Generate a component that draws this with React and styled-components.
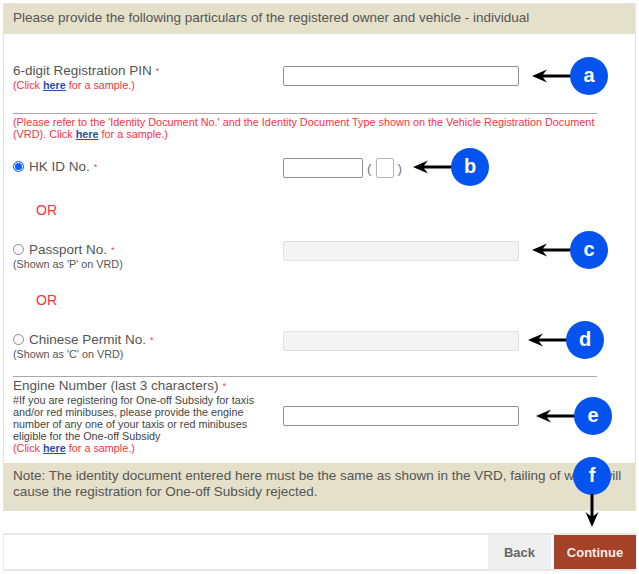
import styled, { createGlobalStyle } from 'styled-components';

const GlobalStyle = createGlobalStyle`
  html, body { margin: 0; padding: 0; background: #fff; }
  body { font-family: "Liberation Sans", Arial, sans-serif; color: #555; }
`;

const Page = styled.div`
  position: relative;
  width: 639px;
  height: 574px;
  padding: 3px 3px 0;
  box-sizing: border-box;
  overflow: hidden;
`;

const Panel = styled.div`
  width: 633px;
  height: 508px;
  box-sizing: border-box;
  border: 1px solid #e4e4e4;
  display: flex;
  flex-direction: column;
`;

const Banner = styled.div`
  background: #e4e0ca;
  font-size: 13.5px;
  line-height: 16px;
  color: #555;
  padding: ${(p) => (p.$note ? '5px 9px 0' : '6px 9px 0')};
  height: ${(p) => p.$h}px;
  box-sizing: border-box;
  flex: none;
`;

const Row = styled.div`
  display: grid;
  grid-template-columns: 270px 1fr;
  padding-left: 9px;
  height: ${(p) => p.$h}px;
  flex: none;
  box-sizing: border-box;
  padding-top: ${(p) => p.$top || 0}px;
`;

const LabelCol = styled.div`
  display: flex;
  flex-direction: column;
  margin-top: ${(p) => p.$mt || 0}px;
`;

const Label = styled.div`
  font-size: 13.5px;
  line-height: 16px;
  color: #555;
  display: flex;
  align-items: center;
`;

const Star = styled.span`
  color: #e8435a;
  font-size: 9px;
  margin-left: 4px;
`;

const Sample = styled.div`
  font-size: 10.8px;
  line-height: 12px;
  color: #f5333f;
`;

const SubText = styled.div`
  font-size: 10.8px;
  line-height: 12px;
  color: #555;
`;

const EngineText = styled.div`
  font-size: 10.8px;
  line-height: 12px;
  color: #444;
  width: 250px;
`;

const Link = styled.a`
  color: #1f4fa8;
  font-weight: bold;
  text-decoration: underline;
`;

const Radio = styled.span`
  width: 11px;
  height: 11px;
  border-radius: 50%;
  box-sizing: border-box;
  margin-right: 5px;
  flex: none;
  position: relative;
  top: -1px;
  border: ${(p) => (p.$on ? '1px solid #1a73e8' : '1px solid #8a8a8a')};
  background: ${(p) => (p.$on ? '#0b5fff' : '#fff')};
  box-shadow: ${(p) => (p.$on ? 'inset 0 0 0 1px #fff' : 'none')};
`;

const TextBox = styled.div`
  width: ${(p) => p.$w}px;
  height: 20px;
  margin-top: ${(p) => p.$mt || 0}px;
  box-sizing: border-box;
  border-radius: 2px;
  border: 1px solid ${(p) => (p.$off ? '#e0e0e0' : p.$soft ? '#b5b5b5' : '#8f8f8f')};
  background: ${(p) => (p.$off ? '#f4f4f4' : '#fff')};
  flex: none;
`;

const IdGroup = styled.div`
  display: flex;
  align-items: center;
  height: 20px;
  color: #777;
  font-size: 13.5px;
`;

const Paren = styled.span`
  margin: ${(p) => p.$m};
`;

const Rule = styled.div`
  height: 1px;
  background: #a8a8a8;
  width: 584px;
  margin-left: 9px;
  flex: none;
`;

const Notice = styled.div`
  font-size: 10.85px;
  line-height: 12px;
  color: #f5333f;
  padding: 2px 0 0 9px;
  height: 37px;
  width: 600px;
  box-sizing: border-box;
  flex: none;
`;

const Or = styled.div`
  color: #f5333f;
  font-size: 14px;
  line-height: 16px;
  padding-left: 32px;
  height: ${(p) => p.$h}px;
  flex: none;
`;

const ActionBar = styled.div`
  margin-top: 22px;
  width: 633px;
  height: 38px;
  box-sizing: border-box;
  border: solid #e8e8e8;
  border-width: 2px 0 2px 1px;
  display: flex;
  justify-content: flex-end;
  gap: 3px;
`;

const BarButton = styled.button`
  border: none;
  padding: 0;
  margin: 0;
  height: 34px;
  width: ${(p) => p.$w}px;
  font-family: "Liberation Sans", Arial, sans-serif;
  font-size: 13px;
  font-weight: bold;
  color: ${(p) => (p.$primary ? '#f6eeea' : '#666')};
  background: ${(p) => (p.$primary ? '#a54029' : '#efefef')};
`;

const Callout = styled.div`
  position: absolute;
  left: ${(p) => p.$x - 19}px;
  top: ${(p) => p.$y - 19}px;
  width: 38px;
  height: 38px;
  border-radius: 50%;
  background: #0453ef;
  color: #fff;
  font-size: 20px;
  font-weight: bold;
  line-height: 37px;
  text-align: center;
`;

const ArrowIcon = styled.svg`
  position: absolute;
  left: ${(p) => p.$x}px;
  top: ${(p) => p.$y}px;
`;

const LeftArrow = ({ x, y }) => (
  <ArrowIcon $x={x} $y={y - 7} width="40" height="14" viewBox="0 0 40 14">
    <path d="M0 7 L15 0.5 L11 5.5 H39 V8.5 H11 L15 13.5 Z" fill="#000" />
  </ArrowIcon>
);

const DownArrow = ({ x, y }) => (
  <ArrowIcon $x={x - 7} $y={y} width="14" height="34" viewBox="0 0 14 34">
    <path d="M7 33 L0.5 18 L5.5 22 V0 H8.5 V22 L13.5 18 Z" fill="#000" />
  </ArrowIcon>
);

const SampleNote = () => (
  <Sample>(Click <Link>here</Link> for a sample.)</Sample>
);

const App = () => {
  return (
    <Page>
      <GlobalStyle />
      <Panel>
        <Banner $h={30}>Please provide the following particulars of the registered owner and vehicle - individual</Banner>
        <Row $h={79} $top={29}>
          <LabelCol>
            <Label>6-digit Registration PIN<Star>*</Star></Label>
            <SampleNote />
          </LabelCol>
          <TextBox $w={236} $mt={3} />
        </Row>
        <Rule />
        <Notice>
          (Please refer to the 'Identity Document No.' and the Identity Document Type shown on the Vehicle Registration Document (VRD). Click <Link>here</Link> for a sample.)
        </Notice>
        <Row $h={51} $top={7}>
          <LabelCol $mt={1}>
            <Label><Radio $on />HK ID No.<Star>*</Star></Label>
          </LabelCol>
          <IdGroup>
            <TextBox $w={80} />
            <Paren $m="0 4px 0 4px">(</Paren>
            <TextBox $w={18} $soft />
            <Paren $m="0 0 0 4px">)</Paren>
          </IdGroup>
        </Row>
        <Or $h={31}>OR</Or>
        <Row $h={59} $top={8}>
          <LabelCol $mt={1}>
            <Label><Radio />Passport No.<Star>*</Star></Label>
            <SubText>(Shown as 'P' on VRD)</SubText>
          </LabelCol>
          <TextBox $w={236} $off />
        </Row>
        <Or $h={31}>OR</Or>
        <Row $h={53} $top={8}>
          <LabelCol $mt={1}>
            <Label><Radio />Chinese Permit No.<Star>*</Star></Label>
            <SubText>(Shown as 'C' on VRD)</SubText>
          </LabelCol>
          <TextBox $w={236} $off />
        </Row>
        <Rule />
        <Row $h={86} $top={1}>
          <LabelCol>
            <Label>Engine Number (last 3 characters)<Star>*</Star></Label>
            <EngineText>#If you are registering for One-off Subsidy for taxis and/or red minibuses, please provide the engine number of any one of your taxis or red minibuses eligible for the One-off Subsidy</EngineText>
            <SampleNote />
          </LabelCol>
          <TextBox $w={236} $mt={28} />
        </Row>
        <Banner $h={47} $note>
          Note: The identity document entered here must be the same as shown in the VRD, failing of which will cause the registration for One-off Subsidy rejected.
        </Banner>
      </Panel>
      <ActionBar>
        <BarButton $w={63}>Back</BarButton>
        <BarButton $primary $w={82}>Continue</BarButton>
      </ActionBar>

      <LeftArrow x={532} y={76} />
      <Callout $x={589} $y={76}>a</Callout>
      <LeftArrow x={413} y={167} />
      <Callout $x={470} $y={167}>b</Callout>
      <LeftArrow x={532} y={250} />
      <Callout $x={589} $y={250}>c</Callout>
      <LeftArrow x={528} y={340} />
      <Callout $x={585} $y={340}>d</Callout>
      <LeftArrow x={536} y={416} />
      <Callout $x={593} $y={416}>e</Callout>
      <Callout $x={592} $y={476}>f</Callout>
      <DownArrow x={592} y={494} />
    </Page>
  );
};

export default App;
